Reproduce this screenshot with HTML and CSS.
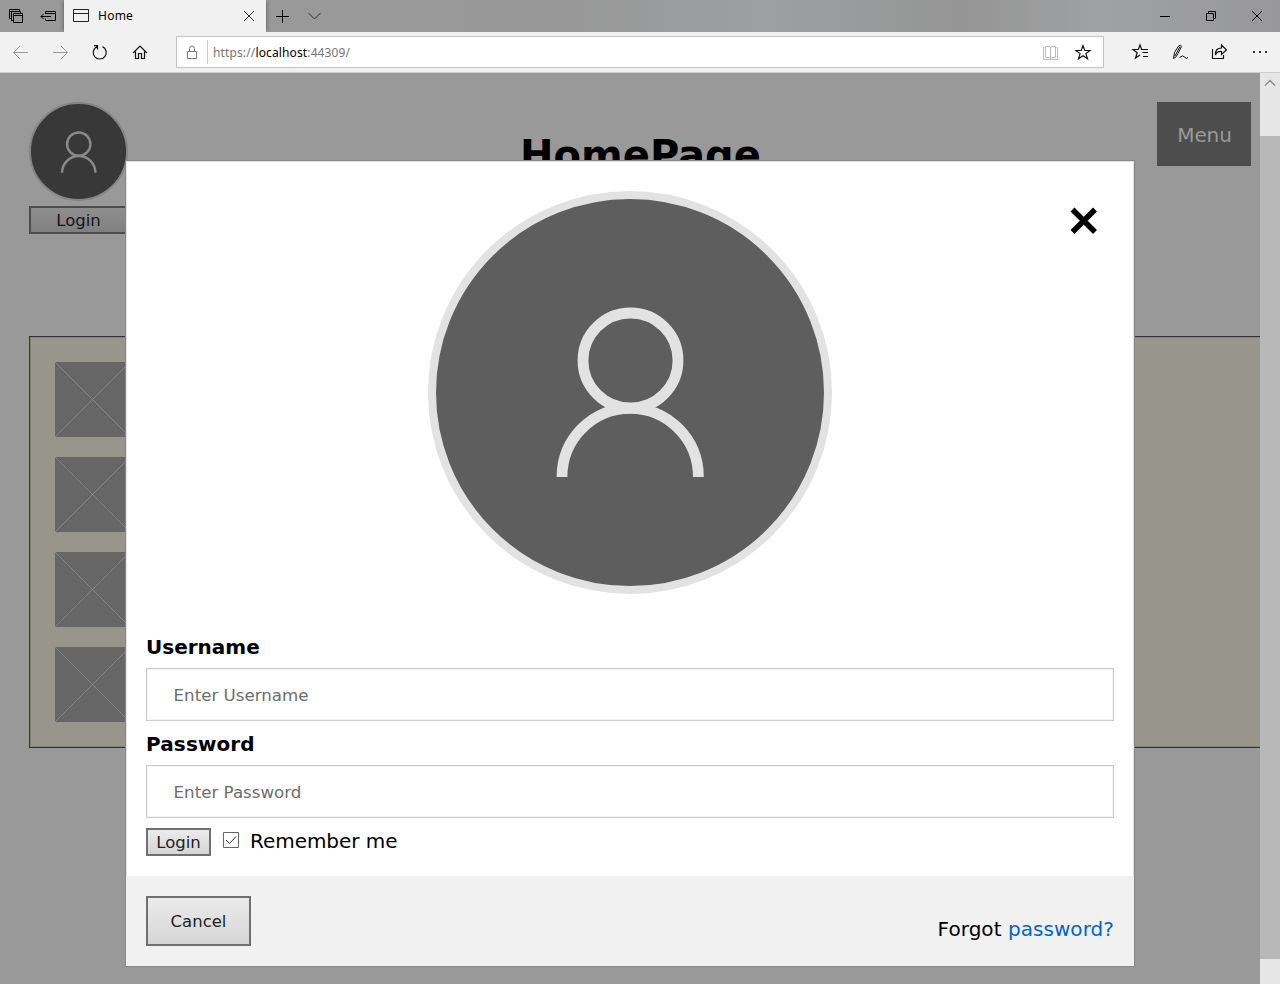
FILE: index.html
```html
<!DOCTYPE html>
<html lang="en">
<head>
<meta charset="utf-8">
<title>Home</title>
<link rel="stylesheet" href="styles.css">
</head>
<body>
<div class="window">
  <div class="tabbar">
    <div class="tab-tools">
      <svg width="64" height="32" fill="none" stroke="#000"><path d="M11 18.500H9.500V9.500H19.500V11M9.500 11.500H19M13 20.500H11.500V11.500H20.500V13M13.500 13.500H22.500V22.500H13.500ZM13.500 15.500H22.500"/><path d="M45.500 14V11.500H55.500V20.500H45.500V18.500M45.500 13.500H55.500M41 16.500H51M43.500 14L41 16.500L43.500 19"/></svg>
    </div>
    <div class="tab">
      <svg class="tab-icon" width="16" height="14" fill="none" stroke="#222"><path d="M.5.500H15.500V12.500H.5ZM.5 4.500H15.500"/></svg>
      <span class="tab-title">Home</span>
      <svg width="12" height="12" fill="none" stroke="#333"><path d="M1 1L11 11M11 1L1 11"/></svg>
    </div>
    <svg width="64" height="32" fill="none" stroke="#000"><path d="M10 16.500H23M16.500 10V23"/><path stroke="#333" d="M42.500 13L48.500 19L54.500 13"/></svg>
    <div class="spacer"></div>
    <svg width="140" height="32" fill="none" stroke="#000"><path d="M20 16.500H30M66.500 13.500H73.500V20.500H66.500ZM68.500 13V11.500H75.500V18.500H74M112 11L122 21M122 11L112 21"/></svg>
  </div>
  <div class="toolbar">
    <svg class="nav" width="176" height="40" fill="none" stroke="#999"><path d="M28 20.500H13.500M20 14L13.500 20.500L20 27M53 20.500H67.500M61 14L67.500 20.500L61 27"/><path stroke="#111" stroke-width="1.200" d="M97 14.600A6.500 6.500 0 1 0 102.500 14.600M94 13.600H97.500V17.500"/><path stroke="#111" stroke-width="1.200" d="M133 21L140 14L147 21M135.500 19V26.500H138.500V21.500H141.500V26.500H144.500V19"/></svg>
    <div class="address">
      <svg width="30" height="30" fill="none" stroke="#777"><path d="M10.500 14.500H19.500V21.500H10.500ZM12.500 14V11.500A2.500 2.500 0 0 1 17.500 11.500V14"/></svg>
      <div class="url">https://<b>localhost</b>:44309/</div>
      <svg width="64" height="30" fill="none"><path stroke="#bbb" d="M5.500 10.500H4.500V22.500H18.500V10.500H17.500M6.500 9.500H10.500L11.500 10.500L12.500 9.500H16.500V20.500H6.500ZM11.500 10V22"/><path stroke="#111" stroke-width="1.200" d="M44 8.700L45.800 13.500H51L46.900 16.600L48.500 21.700L44 18.700L39.500 21.700L41.100 16.600L37 13.500H42.200Z"/></svg>
    </div>
    <svg class="actions" width="176" height="40" fill="none" stroke="#111"><path stroke-width="1.200" d="M40 17.500H37.700L36 13L34.300 17.500H29L33.200 20.700L31.500 26L36 23"/><path d="M37 17.500H44M38.500 20.500H44M39 24.500H44"/><path d="M69.500 26.500L70.500 20.500L74.500 14Q77 12 77.500 14.500L74 21.500Q72 26 69.500 26.500M71 24L76 14.500M75.500 25.500Q79 22.500 80.500 25Q82.500 27.500 84 25.500"/><path stroke-width="1.200" d="M108.500 17V26.500H119.500V23M111.500 23Q111 16 117.500 16V13L122.500 18L117.500 22.500V19.500Q113 19 111.500 23Z"/><path stroke-width="2" stroke="#333" d="M149 20H151M155 20H157M161 20H163"/></svg>
  </div>
  <div class="viewport">
    <div class="page">
      <header class="header">
        <div class="profile">
          <svg class="avatar-small" viewBox="0 0 404 404"><circle cx="202" cy="202" r="198" fill="#383838" stroke="#858585" stroke-width="8"/><g fill="none" stroke="#898989" stroke-width="10"><circle cx="203" cy="172" r="47.500"/><path d="M135 289A68 69 0 0 1 271 289"/></g></svg>
          <div class="btn login-page">Login</div>
        </div>
        <h1 class="title">HomePage</h1>
        <div class="menu">Menu</div>
      </header>
      <div class="content">
        <svg class="tile" viewBox="0 0 75 75"><path d="M0 0L75 75M75 0L0 75"/></svg>
        <svg class="tile" viewBox="0 0 75 75"><path d="M0 0L75 75M75 0L0 75"/></svg>
        <svg class="tile" viewBox="0 0 75 75"><path d="M0 0L75 75M75 0L0 75"/></svg>
        <svg class="tile" viewBox="0 0 75 75"><path d="M0 0L75 75M75 0L0 75"/></svg>
      </div>
    </div>
    <div class="scrollbar">
      <svg width="20" height="20" fill="none" stroke="#888" stroke-width="1.300"><path d="M5 12.500L10 7.500L15 12.500"/></svg>
      <div class="thumb"></div>
    </div>
    <div class="modal">
      <svg class="close" width="28" height="28" fill="none" stroke="#000" stroke-width="5.500"><path d="M2.500 2.500L25 25M25 2.500L2.500 25"/></svg>
      <div class="picture">
        <svg width="404" height="404" viewBox="0 0 404 404"><ellipse cx="202" cy="201.500" rx="198" ry="197.500" fill="#5e5e5e" stroke="#e2e2e2" stroke-width="8"/><g fill="none" stroke="#e2e2e2" stroke-width="10.800"><ellipse cx="202.500" cy="169.500" rx="47.500" ry="47.500"/><path d="M134 286A68.200 68.700 0 0 1 270.400 286"/></g></svg>
      </div>
      <div class="form">
        <div class="label">Username</div>
        <div class="field">Enter Username</div>
        <div class="label label-password">Password</div>
        <div class="field">Enter Password</div>
        <div class="row">
          <div class="btn login">Login</div>
          <svg class="check" width="16" height="16" fill="none"><path fill="#fff" stroke="#666" d="M.5.500H15.500V15.500H.5Z"/><path stroke="#333" d="M3 8L6.500 11.500L13 4.500"/></svg>
          <span class="remember">Remember me</span>
        </div>
      </div>
      <div class="footer">
        <div class="btn cancel">Cancel</div>
        <div class="forgot">Forgot <a>password?</a></div>
      </div>
    </div>
  </div>
</div>
</body>
</html>
```
FILE: styles.css
```css
* { box-sizing: border-box; }
body { margin: 0; font: 20px "DejaVu Sans", Verdana, sans-serif; color: #000; }
svg { display: block; flex: none; }
.window { width: 1280px; height: 984px; display: flex; flex-direction: column; overflow: hidden; }
.tabbar { height: 32px; flex: none; display: flex; background: linear-gradient(90deg, #999 0, #999 22%, #989898 45%, #9d9fa1 60%, #959595 75%, #a0a1a3 86%, #98989a 100%); }
.tab { width: 202px; background: #f1f1f1; display: flex; align-items: center; padding: 0 11px 0 9px; font: 12px/32px "Noto Sans", sans-serif; letter-spacing: .25px; box-shadow: 0 0 4px #555; clip-path: inset(0 -4px); }
.tab-icon { margin-right: 9px; }
.tab-title { flex: 1; }
.spacer { flex: 1; }
.toolbar { height: 41px; flex: none; display: flex; background: #f1f1f1; border-bottom: 1px solid #ccc; }
.address { width: 928px; height: 32px; margin-top: 4px; border: 1px solid #c6c6c6; background: #fff; display: flex; }
.url { flex: 1; margin: 3px 0; border-left: 1px solid #ccc; padding-left: 5px; font: 12px/25px "Noto Sans", sans-serif; letter-spacing: .13px; color: #767676; }
.url b { font-weight: 400; color: #000; }
.viewport { flex: 1; display: flex; position: relative; min-height: 0; }
.page { width: 1260px; background: #999; overflow: hidden; }
.header { height: 263px; display: flex; padding: 29px 9px 0 29px; }
.profile { width: 99px; }
.avatar-small { width: 99px; height: 99px; }
.btn { display: flex; align-items: center; justify-content: center; border: 2px solid #707070; background: linear-gradient(#ebebeb, #d5d5d5); color: #222; font-size: 16.5px; }
.login-page { height: 28px; margin-top: 5px; border-color: #4c4c4c; background: linear-gradient(#8e8e8e, #808080); color: #151515; }
.title { flex: 1; margin: 29px 4px 0 0; text-align: center; font-size: 40px; line-height: 48px; }
.menu { width: 94px; height: 64px; padding: 1px 0 0 1px; background: #4d4d4d; color: #999; display: flex; align-items: center; justify-content: center; letter-spacing: -.15px; }
.content { width: 1240px; height: 412px; margin-left: 29px; border: 1px solid #333; box-shadow: inset 0 0 0 1px #858279; background: #98958d; padding: 25px; display: flex; flex-direction: column; gap: 20px; }
.tile { width: 75px; height: 75px; background: #666; stroke: #8c8c8c; stroke-width: .8; }
.scrollbar { width: 20px; background: #e6e6e6; display: flex; flex-direction: column; }
.thumb { margin-top: 43px; height: 823px; background: #b8b8b8; }
.modal { position: absolute; left: 125px; top: 87px; width: 1010px; height: 807px; border: 1px solid #888; background: #fff; box-shadow: inset 0 0 0 1px #e2e2e2; display: flex; flex-direction: column; }
.close { position: absolute; right: 36px; top: 46px; }
.picture { margin-top: 30px; display: flex; justify-content: center; }
.form { flex: 1; padding: 40px 20px 0; }
.label { height: 33px; font-weight: 700; line-height: 24px; }
.label-password { letter-spacing: .12px; }
.field { height: 53px; margin-bottom: 11px; border: 1px solid #ccc; box-shadow: inset 0 0 0 1px #f3f3f3; padding-left: 26.6px; line-height: 53px; font-size: 16.67px; color: #6c6c6c; background: #fff; }
.row { display: flex; margin-top: -1px; }
.login { width: 65px; height: 28px; }
.check { margin: 4px 11px 0 12px; }
.remember { line-height: 26px; letter-spacing: -.05px; }
.footer { height: 90px; background: #f1f1f1; padding: 20px; display: flex; justify-content: space-between; }
.cancel { width: 105px; height: 50px; }
.forgot { margin-top: 21px; line-height: 24px; letter-spacing: .05px; }
.forgot a { color: #06c; }
```
